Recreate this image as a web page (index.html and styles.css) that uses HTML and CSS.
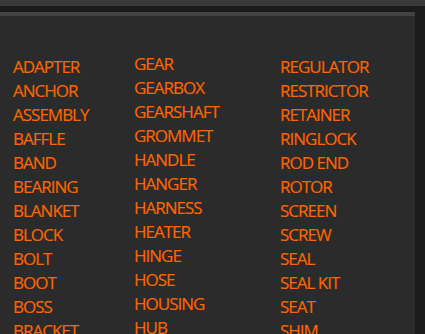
FILE: index.html
```html
<!DOCTYPE html>
<html lang="en">

<head>
  <meta charset="UTF-8" />
  <meta name="viewport" content="width=device-width, initial-scale=1.0" />
  <title>Parts</title>
  <link rel="stylesheet" href="styles.css">
</head>

<body>
  <div class="topbar"></div>

  <div class="panel">
    <div class="parts">
      <!-- A - B -->
      <ul class="col">
        <li>ADAPTER</li>
        <li>ANCHOR</li>
        <li>ASSEMBLY</li>
        <li>BAFFLE</li>
        <li>BAND</li>
        <li>BEARING</li>
        <li>BLANKET</li>
        <li>BLOCK</li>
        <li>BOLT</li>
        <li>BOOT</li>
        <li>BOSS</li>
        <li>BRACKET</li>
      </ul>
      <!-- G - H -->
      <ul class="col col-g">
        <li>GEAR</li>
        <li>GEARBOX</li>
        <li>GEARSHAFT</li>
        <li>GROMMET</li>
        <li>HANDLE</li>
        <li>HANGER</li>
        <li>HARNESS</li>
        <li>HEATER</li>
        <li>HINGE</li>
        <li>HOSE</li>
        <li>HOUSING</li>
        <li>HUB</li>
      </ul>
      <!-- R - S -->
      <ul class="col">
        <li>REGULATOR</li>
        <li>RESTRICTOR</li>
        <li>RETAINER</li>
        <li>RINGLOCK</li>
        <li>ROD END</li>
        <li>ROTOR</li>
        <li>SCREEN</li>
        <li>SCREW</li>
        <li>SEAL</li>
        <li>SEAL KIT</li>
        <li>SEAT</li>
        <li>SHIM</li>
      </ul>
    </div>
  </div>
</body>

</html>
```

FILE: styles.css
```css
* {
  box-sizing: border-box;
}

html,
body {
  height: 100%;
}

body {
  margin: 0;
  background-color: #1b1b1b;
  font-family: "Open Sans", sans-serif;
  overflow: hidden;
}

.topbar {
  height: 6px;
  background-color: #3a3a3a;
}

.panel {
  width: 415px;
  margin-top: 6px;
  height: 100%;
  background-color: #2b2b2b;
  border-top: 4px solid #424242;
  padding: 39px 0 0 13px;
}

.parts {
  display: grid;
  grid-template-columns: 121px 146px 1fr;
}

.col {
  list-style: none;
  margin: 0;
  padding: 0;
}

.col-g {
  margin-top: -3px;
}

.col li {
  color: #ff6600;
  font-size: 17px;
  line-height: 24px;
  letter-spacing: -1px;
  -webkit-text-stroke: 0.12px #ff6600;
  white-space: nowrap;
}
```
